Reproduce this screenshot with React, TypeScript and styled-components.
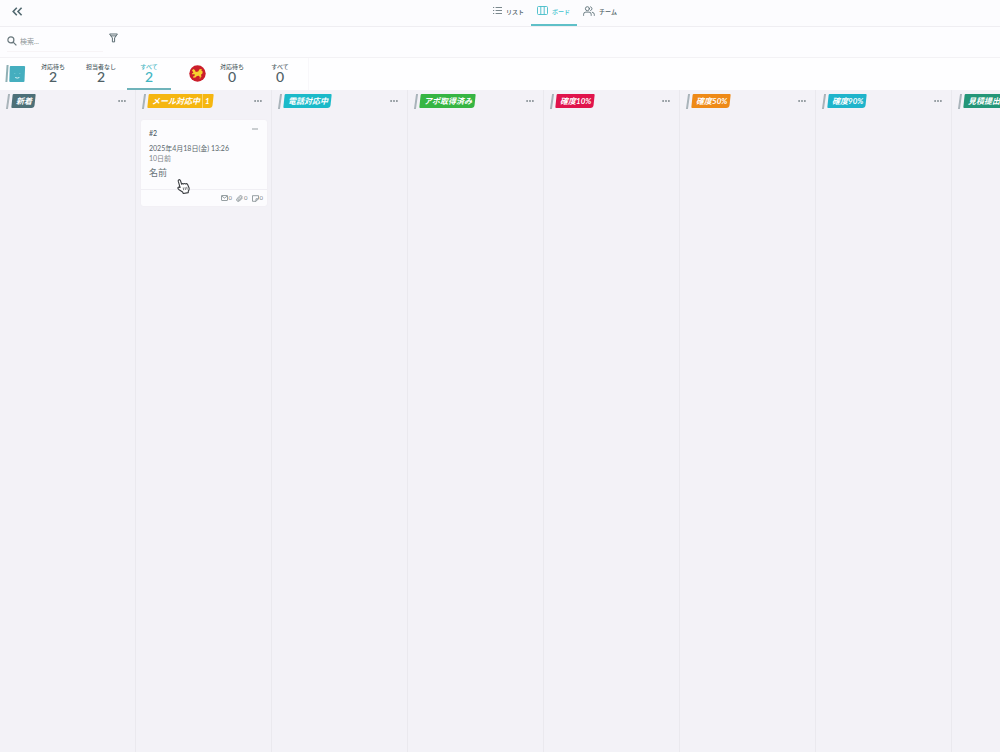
import React from "react";
import styled, { createGlobalStyle } from "styled-components";

const GlobalStyle = createGlobalStyle`
  *, *::before, *::after { box-sizing: border-box; }
  body {
    margin: 0;
    background: #f3f2f7;
    color: #4e6066;
    font-family: Lato, "Noto Sans CJK JP", sans-serif;
    font-size: 6px;
  }
  button, input { font: inherit; color: inherit; border: 0; padding: 0; background: none; }
  button { cursor: pointer; }
  a { color: inherit; text-decoration: none; }
  svg { display: block; flex: none; }
`;

const Page = styled.div`
  display: flex;
  flex-direction: column;
  min-height: 100vh;
  overflow: hidden;
`;

const TopBar = styled.header`
  display: flex;
  height: 27px;
  background: #fcfcfe;
  border-bottom: 1px solid #efeef2;
`;

const CollapseButton = styled.button`
  display: flex;
  align-items: center;
  width: 34px;
  height: 23px;
  padding-left: 12px;
`;

const Tabs = styled.nav`
  display: flex;
  flex: 1;
  justify-content: center;
  padding-left: 77px;
`;

const Tab = styled.a<{ $active?: boolean }>`
  display: flex;
  align-items: center;
  gap: 4px;
  height: 26px;
  padding: 0 7px 3px 6px;
  line-height: 10px;
  font-weight: 500;
  color: ${(p) => (p.$active ? "#3fc3cf" : "#4f6066")};
  border-bottom: 2px solid ${(p) => (p.$active ? "#5fc0c8" : "transparent")};
`;

const TabText = styled.span`
  padding-top: 2px;
`;

const SearchBar = styled.div`
  display: flex;
  gap: 5px;
  height: 31px;
  padding: 4px 7px;
  background: #fdfdff;
  border-bottom: 1px solid #f3f2f5;
`;

const SearchField = styled.label`
  display: flex;
  align-items: center;
  gap: 3px;
  width: 96px;
  height: 21px;
  border-bottom: 1px solid #f7f4f6;
`;

const SearchInput = styled.input`
  flex: 1;
  min-width: 0;
  font-size: 7px;
  line-height: 12px;
  outline: 0;
  &::placeholder { color: #8e9699; opacity: 1; }
`;

const FilterButton = styled.button`
  display: flex;
  align-items: center;
  justify-content: center;
  width: 10px;
  height: 14px;
`;

const StatBar = styled.section`
  display: flex;
  height: 32px;
  background: #fefeff;
`;

const StatGroup = styled.div`
  display: flex;
  gap: 4px;
`;

const MemberGroup = styled(StatGroup)`
  padding-right: 6px;
  border-right: 1px solid #f8f7fa;
`;

const TeamBadge = styled.div`
  display: flex;
  align-items: center;
  gap: 1px;
  width: 31px;
  height: 31px;
  padding-left: 6px;
`;

const MemberBadge = styled(TeamBadge)`
  width: 39px;
  padding-left: 18px;
`;

const Stat = styled.button<{ $active?: boolean }>`
  display: flex;
  flex-direction: column;
  align-items: center;
  width: 44px;
  padding-top: 5px;
  color: ${(p) => (p.$active ? "#42b5c2" : "#4f6066")};
  border-bottom: 2px solid ${(p) => (p.$active ? "#6fb3ba" : "transparent")};
`;

const StatLabel = styled.span`
  line-height: 8px;
  font-weight: 500;
  white-space: nowrap;
`;

const StatValue = styled.span`
  font-size: 14px;
  line-height: 12px;
  font-weight: 500;
`;

const Board = styled.main`
  display: flex;
  flex: 1;
`;

const Column = styled.section`
  flex: none;
  width: 136px;
  border-right: 1px solid #eae9ee;
`;

const ColumnHead = styled.div`
  display: flex;
  align-items: center;
  height: 22px;
  padding: 0 9px 0 7px;
`;

const Slash = styled.span<{ $team?: boolean }>`
  flex: none;
  width: 2px;
  height: ${(p) => (p.$team ? 17 : 15)}px;
  background: ${(p) => (p.$team ? "#8fb0b5" : "#a9b4ba")};
  transform: skewX(${(p) => (p.$team ? -4 : -8)}deg);
`;

const Tag = styled.h2<{ $color: string }>`
  position: relative;
  z-index: 0;
  display: flex;
  gap: 2px;
  margin: 0 0 0 3px;
  padding: 0 4px;
  font-size: 8px;
  line-height: 14px;
  font-weight: 700;
  font-style: italic;
  white-space: nowrap;
  color: #fff;
  &::before {
    content: "";
    position: absolute;
    inset: 0 1px 0 0;
    z-index: -1;
    border-radius: 1px 1px 3px 1px;
    background: ${(p) => p.$color};
    transform: skewX(-6deg);
  }
`;

const Count = styled.span`
  padding-left: 2px;
  border-left: 1px solid #f9d470;
`;

const MoreButton = styled.button`
  display: flex;
  align-items: center;
  justify-content: center;
  width: 8px;
  height: 8px;
  margin-left: auto;
`;

const Card = styled.article`
  margin: 8px 4px 0 5px;
  background: #fcfcfe;
  border-radius: 2px;
  box-shadow: 0 0 1px #e3e2e8;
`;

const CardBody = styled.div`
  position: relative;
  height: 69px;
  padding: 8px;
  line-height: 10px;
`;

const CardTop = styled.div`
  display: flex;
  height: 15px;
  font-size: 7px;
  line-height: 10px;
  font-weight: 500;
`;

const CardMore = styled(MoreButton)`
  margin-top: -3px;
`;

const CardDate = styled.time`
  display: block;
  font-size: 7px;
  white-space: nowrap;
  color: #5b686d;
`;

const CardAge = styled.div`
  font-size: 7px;
  color: #7c868a;
`;

const CardName = styled.h3`
  margin: 3px 0 0;
  font-size: 9px;
  line-height: 14px;
  font-weight: 400;
  color: #69757a;
`;

const Cursor = styled.svg`
  position: absolute;
  left: 36px;
  top: 59px;
`;

const CardFoot = styled.footer`
  display: flex;
  justify-content: flex-end;
  gap: 4px;
  height: 17px;
  padding: 0 4px;
  border-top: 1px solid #f0eff4;
`;

const Meta = styled.span`
  display: flex;
  align-items: center;
  gap: 1px;
  font-size: 6px;
  line-height: 10px;
  color: #7c868a;
`;

const columns: { name: string; color: string; count?: number }[] = [
  { name: "新着", color: "#4d7078" },
  { name: "メール対応中", color: "#f5b610", count: 1 },
  { name: "電話対応中", color: "#1bbac9" },
  { name: "アポ取得済み", color: "#36b543" },
  { name: "確度10%", color: "#e0144c" },
  { name: "確度50%", color: "#ee8a17" },
  { name: "確度90%", color: "#1fb4cb" },
  { name: "見積提出済み", color: "#249678" },
];

const Dots = () => (
  <svg width="8" height="2" viewBox="0 0 8 2" fill="#7b868a">
    <circle cx="1.1" cy="1" r=".9" />
    <circle cx="4" cy="1" r=".9" />
    <circle cx="6.9" cy="1" r=".9" />
  </svg>
);

const ListIcon = () => (
  <svg width="9" height="9" viewBox="0 0 9 9" stroke="#6b7b80" strokeWidth="0.9">
    <path d="M2.6 1.5H9M2.6 4.5H9M2.6 7.5H9M0 1.5h1.2M0 4.5h1.2M0 7.5h1.2" />
  </svg>
);

const BoardIcon = () => (
  <svg width="11" height="9" viewBox="0 0 11 9" fill="none" stroke="#43bcc8" strokeWidth="0.9">
    <rect x="0.5" y="0.5" width="10" height="8" rx="1" />
    <path d="M3.8 0.5v8M7.2 0.5v8" />
  </svg>
);

const TeamIcon = () => (
  <svg width="12" height="10" viewBox="0 0 12 10" fill="none" stroke="#5b6f76" strokeWidth="0.9" strokeLinecap="round">
    <circle cx="4.4" cy="2.7" r="2" />
    <path d="M0.6 9.4V8.3Q0.6 6.1 2.9 6.1H6Q8.2 6.1 8.2 8.3V9.4M7.6 0.8a2 2 0 0 1 0 3.8M9.3 6.2Q11.3 6.5 11.3 8.4V9.4" />
  </svg>
);

const SearchIcon = () => (
  <svg width="10" height="10" viewBox="0 0 10 10" fill="none" stroke="#68777c" strokeWidth="1.2">
    <circle cx="3.9" cy="3.9" r="3" />
    <path d="M6.1 6.1L9.4 9.4" />
  </svg>
);

const TeamAvatar = () => (
  <svg width="17" height="16" viewBox="0 0 17 16">
    <path d="M1.6 0H15q1.2 0 1.1 1l-.6 14q0 1-1 1H1.2q-1 0-.9-1L.8 1q0-1 .8-1z" fill="#45aebf" />
    <circle cx="5.8" cy="7.5" r=".6" fill="#76cad3" />
    <circle cx="10.8" cy="7.5" r=".6" fill="#76cad3" />
    <path d="M6.2 11.5q2.1 1.2 4.2 0" fill="none" stroke="#d8f2f5" />
  </svg>
);

const MemberAvatar = () => (
  <svg width="17" height="17" viewBox="0 0 17 17">
    <circle cx="8.5" cy="8.5" r="8.2" fill="#cb1e2b" />
    <path
      d="M3 5.2L4.5 4l1.3 1 1 2 2.4-.4 1.3-2.3 1.6-.4 1 1.1-1 .6 1.6.9-.3 2-1.4 1.2.5 2-1.7.2-.9-1.2-2 .3-1.5 1.6-2.2.2.5-1.2 1-.7-.2-1.8-1.9.3-.8-1 1.6-.7z"
      fill="#f6d12f"
    />
    <path d="M4 12l2-1M12 12.6l-1.6.5" stroke="#f6d12f" strokeWidth=".7" />
  </svg>
);

interface StatItemProps {
  label: string;
  value: number;
  active?: boolean;
}

const StatItem = ({ label, value, active }: StatItemProps) => (
  <Stat type="button" $active={active}>
    <StatLabel>{label}</StatLabel>
    <StatValue>{value}</StatValue>
  </Stat>
);

const TicketCard = () => (
  <Card>
    <CardBody>
      <CardTop>
        #2
        <CardMore type="button" aria-label="カードメニュー">
          <svg width="6" height="2" viewBox="0 0 6 2" fill="#8b9498">
            <circle cx="1" cy="1" r=".8" />
            <circle cx="3" cy="1" r=".8" />
            <circle cx="5" cy="1" r=".8" />
          </svg>
        </CardMore>
      </CardTop>
      <CardDate dateTime="2025-04-18T13:26">2025年4月18日(金) 13:26</CardDate>
      <CardAge>10日前</CardAge>
      <CardName>名前</CardName>
      <Cursor width="13" height="15" viewBox="0 0 13 15">
        <path
          d="M3.1 8.5L1.3 2.4Q1 .9 2.1.7 3.1.5 3.5 1.8L4.7 5.2Q5.5 4.1 6.5 5 7.5 4 8.4 5 9.7 4.2 10.6 5.5L12 8.7q.5 2-.7 3.4v1.5L6.3 14.5 5.6 13 2.1 10.7Q.4 9.4 1 8.6q.7-.9 2.1-.1z"
          fill="#fff"
          stroke="#3b3e42"
          strokeWidth="1.1"
          strokeLinejoin="round"
        />
        <path d="M6.2 8.5l.5 2.7M8 8.2l.5 2.7M9.7 7.9l.5 2.7" stroke="#55585c" strokeWidth=".8" />
      </Cursor>
    </CardBody>
    <CardFoot>
      <Meta>
        <svg width="7" height="6" viewBox="0 0 7 6" fill="none" stroke="#7c888c" strokeWidth=".8">
          <rect x=".5" y=".5" width="6" height="5" rx=".5" />
          <path d="M.7 1l2.8 2.1L6.3 1" />
        </svg>
        0
      </Meta>
      <Meta>
        <svg width="7" height="7" viewBox="0 0 7 7" fill="none" stroke="#7c888c" strokeWidth=".8" strokeLinecap="round">
          <path d="M6.4 3L3.4 6Q2.2 7 1.1 5.9T1 3.6L3.7 1Q4.7.1 5.6.9t0 1.9L3.2 5.1q-.6.5-1 .1t0-1L4.4 2" />
        </svg>
        0
      </Meta>
      <Meta>
        <svg width="7" height="7" viewBox="0 0 7 7" fill="none" stroke="#7c888c" strokeWidth=".8" strokeLinejoin="round">
          <path d="M.5.7h6v3.1L4 6.3H.5zM6.5 3.8H4v2.5" />
        </svg>
        0
      </Meta>
    </CardFoot>
  </Card>
);

export default function App() {
  return (
    <Page lang="ja">
      <GlobalStyle />
      <TopBar>
        <CollapseButton type="button" aria-label="メニューを閉じる">
          <svg width="11" height="9" viewBox="0 0 11 9" fill="none" stroke="#526970" strokeWidth="1.6">
            <path d="M4.8 .7L1.2 4.5 4.8 8.3M9.6 .7L6 4.5 9.6 8.3" />
          </svg>
        </CollapseButton>
        <Tabs>
          <Tab href="#list"><ListIcon /><TabText>リスト</TabText></Tab>
          <Tab href="#board" $active aria-current="page"><BoardIcon /><TabText>ボード</TabText></Tab>
          <Tab href="#team"><TeamIcon /><TabText>チーム</TabText></Tab>
        </Tabs>
      </TopBar>
      <SearchBar>
        <SearchField>
          <SearchIcon />
          <SearchInput type="text" placeholder="検索..." aria-label="検索" />
        </SearchField>
        <FilterButton type="button" aria-label="絞り込み">
          <svg width="9" height="10" viewBox="0 0 9 10" fill="none" stroke="#5b6c72" strokeWidth="1" strokeLinejoin="round">
            <path d="M.6 1h7.8L5.6 5v3.9H3.4V5zM1.8 2.9h5.4" />
          </svg>
        </FilterButton>
      </SearchBar>
      <StatBar>
        <TeamBadge><Slash $team /><TeamAvatar /></TeamBadge>
        <StatGroup>
          <StatItem label="対応待ち" value={2} />
          <StatItem label="担当者なし" value={2} />
          <StatItem label="すべて" value={2} active />
        </StatGroup>
        <MemberBadge><MemberAvatar /></MemberBadge>
        <MemberGroup>
          <StatItem label="対応待ち" value={0} />
          <StatItem label="すべて" value={0} />
        </MemberGroup>
      </StatBar>
      <Board>
        {columns.map((c) => (
          <Column key={c.name}>
            <ColumnHead>
              <Slash />
              <Tag $color={c.color}>
                {c.name}
                {c.count !== undefined && <Count>{c.count}</Count>}
              </Tag>
              <MoreButton type="button" aria-label={`${c.name}のメニュー`}><Dots /></MoreButton>
            </ColumnHead>
            {c.count !== undefined && <TicketCard />}
          </Column>
        ))}
      </Board>
    </Page>
  );
}
